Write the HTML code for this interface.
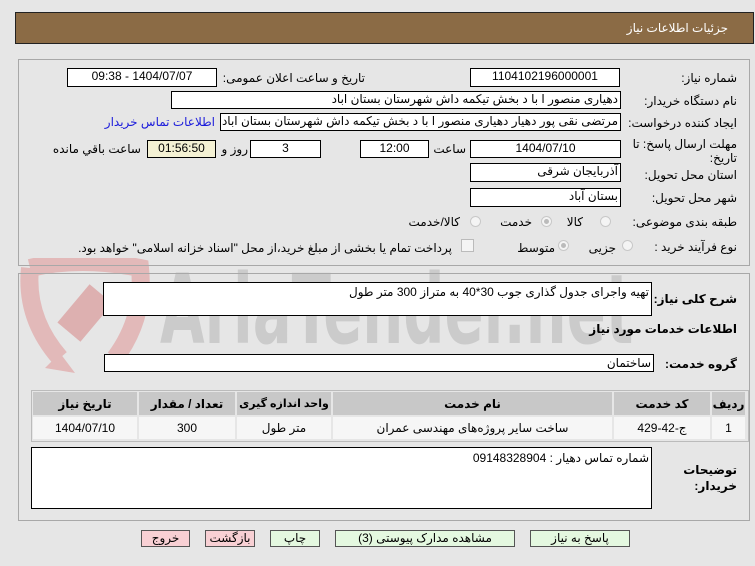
<!DOCTYPE html>
<html><head><meta charset="utf-8"><style>
body{margin:0;width:755px;height:566px;background:#e6e6e6;font-family:"Liberation Sans","DejaVu Sans",sans-serif;font-size:12px;color:#000;position:relative;overflow:hidden}
.a{position:absolute}
.box{position:absolute;background:#fff;border:1px solid #000;box-sizing:border-box;font-size:12px;line-height:15px;white-space:nowrap;overflow:hidden;direction:rtl}
.c{text-align:center}
.l{position:absolute;direction:rtl;white-space:nowrap;font-size:12px}
.panel{position:absolute;border:1px solid #a8a8a8;box-sizing:border-box}
.rad{position:absolute;width:11px;height:11px;border-radius:50%;border:1px solid #c8c8c8;background:#f4f4f4;box-sizing:border-box}
.rad.s::after{content:"";position:absolute;left:2px;top:2px;width:5px;height:5px;border-radius:50%;background:#bbb}
.btn{position:absolute;height:17px;border:1px solid #555;box-sizing:border-box;text-align:center;font-size:12px;line-height:15px;direction:rtl}
table{border-collapse:separate;border-spacing:2px}
td{font-size:12px;text-align:center;padding:0;white-space:nowrap}
</style></head><body>
<div class="a" style="left:15px;top:12px;width:739px;height:32px;background:#8b6b45;border:1px solid #222;box-sizing:border-box"></div>
<div class="l" style="right:27px;top:21px;color:#fff;font-size:12px">جزئیات اطلاعات نیاز</div>

<div class="a" style="left:0;top:0;width:755px;height:566px;overflow:hidden">
<div class="a" style="left:160px;top:262px;font-size:96px;font-weight:bold;color:#cbcbcb;line-height:96px;white-space:nowrap;transform:scaleX(0.6);transform-origin:0 0;font-family:'DejaVu Sans','Liberation Sans',sans-serif">AriaTender.net</div>
<svg class="a" style="left:20px;top:258px" width="130" height="120" viewBox="0 0 130 120"><path d="M10 10 Q60 -2 120 10 Q125 60 95 100 M10 10 Q5 60 40 100" fill="none" stroke="#e2b9b9" stroke-width="18"/><rect x="50" y="30" width="30" height="50" fill="#ddb0b0" transform="rotate(40 65 55)"/><path d="M40 95 L55 115 L25 110 Z" fill="#e2b9b9"/></svg>
</div>

<div class="panel" style="left:18px;top:59px;width:732px;height:207px"></div>
<div class="panel" style="left:18px;top:273px;width:732px;height:248px"></div>

<div class="l" style="right:18px;top:71px">شماره نیاز:</div>
<div class="box c" style="left:470px;top:68px;width:150px;height:19px">1104102196000001</div>
<div class="l" style="right:390px;top:71px">تاریخ و ساعت اعلان عمومی:</div>
<div class="box c" style="left:67px;top:68px;width:150px;height:19px">1404/07/07 - 09:38</div>

<div class="l" style="right:18px;top:94px">نام دستگاه خریدار:</div>
<div class="box" style="left:171px;top:91px;width:450px;height:18px;padding-right:2px">دهیاری منصور ا با د بخش تیکمه داش شهرستان بستان اباد</div>

<div class="l" style="right:18px;top:116px">ایجاد کننده درخواست:</div>
<div class="box" style="left:220px;top:113px;width:401px;height:18px;padding-right:2px">مرتضی نقی پور دهیار دهیاری منصور ا با د بخش تیکمه داش شهرستان بستان اباد</div>
<div class="l" style="right:540px;top:115px;color:#1a1adb">اطلاعات تماس خریدار</div>

<div class="l" style="right:18px;top:137px;line-height:14px;text-align:right">مهلت ارسال پاسخ: تا<br>تاریخ:</div>
<div class="box c" style="left:470px;top:140px;width:151px;height:18px">1404/07/10</div>
<div class="l" style="right:289px;top:142px">ساعت</div>
<div class="box c" style="left:360px;top:140px;width:69px;height:18px">12:00</div>
<div class="box c" style="left:250px;top:140px;width:71px;height:18px">3</div>
<div class="l" style="right:507px;top:142px">روز و</div>
<div class="box c" style="left:147px;top:140px;width:69px;height:18px;background:#f4f1d4">01:56:50</div>
<div class="l" style="right:614px;top:142px">ساعت باقي مانده</div>

<div class="l" style="right:18px;top:168px">استان محل تحویل:</div>
<div class="box" style="left:470px;top:163px;width:151px;height:19px;padding-right:2px">آذربایجان شرقی</div>
<div class="l" style="right:18px;top:191px">شهر محل تحویل:</div>
<div class="box" style="left:470px;top:188px;width:151px;height:19px;padding-right:2px">بستان آباد</div>

<div class="l" style="right:18px;top:215px">طبقه بندی موضوعی:</div>
<div class="rad" style="left:600px;top:216px"></div><div class="l" style="right:172px;top:215px">کالا</div>
<div class="rad s" style="left:541px;top:216px"></div><div class="l" style="right:223px;top:215px">خدمت</div>
<div class="rad" style="left:470px;top:216px"></div><div class="l" style="right:295px;top:215px">کالا/خدمت</div>

<div class="l" style="right:18px;top:240px">نوع فرآیند خرید :</div>
<div class="rad" style="left:622px;top:240px"></div><div class="l" style="right:139px;top:241px">جزیی</div>
<div class="rad s" style="left:558px;top:240px"></div><div class="l" style="right:200px;top:241px">متوسط</div>
<div class="a" style="left:461px;top:239px;width:11px;height:11px;border:1px solid #bbb;background:#f4f4f4"></div>
<div class="l" style="right:303px;top:241px">پرداخت تمام یا بخشی از مبلغ خرید،از محل "اسناد خزانه اسلامی" خواهد بود.</div>

<div class="l" style="right:18px;top:292px;font-weight:bold">شرح کلی نیاز:</div>
<div class="box" style="left:103px;top:282px;width:549px;height:34px;padding-right:2px;padding-top:2px">تهیه واجرای جدول گذاری جوب 30*40 به متراز 300 متر طول</div>
<div class="l" style="right:18px;top:322px;font-weight:bold">اطلاعات خدمات مورد نیاز</div>
<div class="l" style="right:18px;top:357px;font-weight:bold">گروه خدمت:</div>
<div class="box" style="left:104px;top:354px;width:550px;height:18px;padding-right:2px;padding-top:1px">ساختمان</div>

<div class="a" style="left:31px;top:390px;width:718px;height:52px;border:1px solid #bbb;box-sizing:border-box;background:#e6e6e6;overflow:hidden">
<table style="width:716px;margin:-1px 0 0 -1px;direction:rtl;table-layout:fixed">
<tr style="height:23px;background:#c8c8c8"><td style="width:33px;font-weight:bold">ردیف</td><td style="width:96px;font-weight:bold">کد خدمت</td><td style="width:279px;font-weight:bold">نام خدمت</td><td style="width:94px;font-weight:bold;font-size:11px">واحد اندازه گیری</td><td style="width:96px;font-weight:bold">تعداد / مقدار</td><td style="font-weight:bold">تاریخ نیاز</td></tr>
<tr style="height:22px;background:#f6f6f6"><td>1</td><td>ج-42-429</td><td>ساخت سایر پروژه‌های مهندسی عمران</td><td>متر طول</td><td>300</td><td>1404/07/10</td></tr>
</table></div>

<div class="l" style="right:18px;top:462px;font-weight:bold;line-height:16px;text-align:right">توضیحات<br>خریدار:</div>
<div class="box" style="left:31px;top:447px;width:621px;height:62px;padding-right:2px;padding-top:3px">شماره تماس دهیار : 09148328904</div>

<div class="btn" style="left:141px;top:530px;width:49px;background:#f8d0d4">خروج</div>
<div class="btn" style="left:205px;top:530px;width:50px;background:#f8d0d4">بازگشت</div>
<div class="btn" style="left:270px;top:530px;width:50px;background:#e4f8e0">چاپ</div>
<div class="btn" style="left:335px;top:530px;width:180px;background:#e4f8e0">مشاهده مدارک پیوستی (3)</div>
<div class="btn" style="left:530px;top:530px;width:100px;background:#e4f8e0">پاسخ به نیاز</div>
</body></html>
